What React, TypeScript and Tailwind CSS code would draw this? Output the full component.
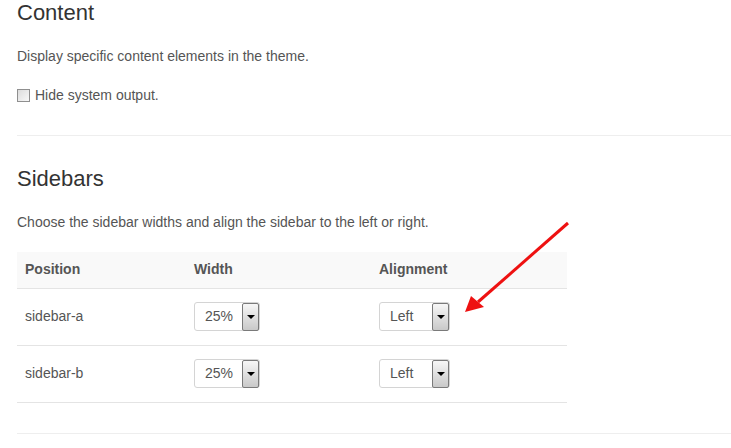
import React from "react";

function Select({ value, width }: { value: string; width: string }) {
  return (
    <div className={`relative inline-flex h-[29px] ${width} items-center rounded-[3px] border border-[#d4d4d4] bg-white`}>
      <span className="pl-[10px] text-[14px] text-[#555]">{value}</span>
      <span className="absolute right-0 top-0 flex h-[28px] w-[17px] items-center justify-center rounded-[2px] border border-[#7a7a7a] bg-gradient-to-b from-[#f7f7f7] to-[#c9c9c9]">
        <span className="h-0 w-0 border-l-[4px] border-r-[4px] border-t-[4px] border-l-transparent border-r-transparent border-t-black" />
      </span>
    </div>
  );
}

export default function App() {
  const rows = ["sidebar-a", "sidebar-b"];
  return (
    <div
      className="relative h-[448px] w-[731px] overflow-hidden bg-white pl-[17px] text-[#555]"
      style={{ fontFamily: '"Liberation Sans", Arial, sans-serif' }}
    >
      <h3 className="mt-[1px] text-[22px] leading-[24px] text-[#333]">Content</h3>
      <p className="mt-[21px] text-[14px] leading-[20px]">Display specific content elements in the theme.</p>
      <label className="mt-[19px] flex h-[20px] items-center text-[14px] leading-[20px]">
        <span className="mr-[5px] inline-block h-[13px] w-[13px] border border-[#8f8f8f] bg-gradient-to-br from-[#dcdcdc] to-[#f8f8f8]" />
        Hide system output.
      </label>
      <div className="mt-[30px] h-px bg-[#eeeeee]" />
      <h3 className="mt-[31px] text-[22px] leading-[24px] text-[#333]">Sidebars</h3>
      <p className="mt-[21px] text-[14px] leading-[20px]">Choose the sidebar widths and align the sidebar to the left or right.</p>
      <table className="mt-[20px] w-[550px] border-collapse text-left text-[14px]">
        <thead>
          <tr className="h-[36px] border-b border-[#e4e4e4] bg-[#f9f9f9]">
            <th className="w-[169px] px-[8px] font-bold text-[#555]">Position</th>
            <th className="w-[185px] px-[8px] font-bold text-[#555]">Width</th>
            <th className="px-[8px] font-bold text-[#555]">Alignment</th>
          </tr>
        </thead>
        <tbody>
          {rows.map((r) => (
            <tr key={r} className="h-[57px] border-b border-[#e4e4e4]">
              <td className="px-[8px] align-middle">{r}</td>
              <td className="px-[8px] align-middle">
                <Select value="25%" width="w-[66px]" />
              </td>
              <td className="px-[8px] align-middle">
                <Select value="Left" width="w-[71px]" />
              </td>
            </tr>
          ))}
        </tbody>
      </table>
      <div className="mt-[30px] h-px bg-[#eeeeee]" />
      <svg className="absolute left-0 top-0" width="731" height="448" viewBox="0 0 731 448">
        <line x1="568" y1="223" x2="478" y2="302" stroke="#ee1111" strokeWidth="3" />
        <polygon points="465,312 471,296 484,307" fill="#ee1111" />
      </svg>
    </div>
  );
}
